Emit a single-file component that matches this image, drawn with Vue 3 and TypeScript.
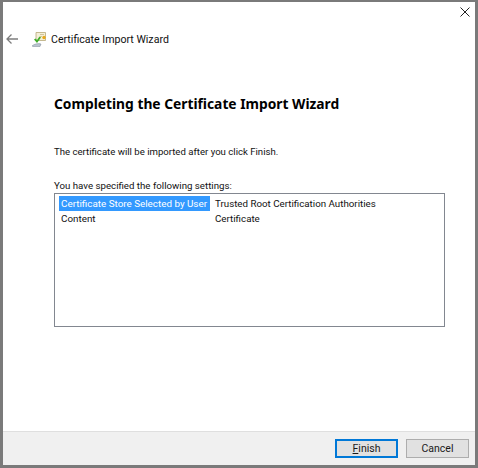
<script setup lang="ts">
const rows: [string, string][] = [
  ['Certificate Store Selected by User', 'Trusted Root Certification Authorities'],
  ['Content', 'Certificate'],
]
</script>

<template>
  <div class="window">
    <button class="close" aria-label="Close">
      <svg width="10" height="10" viewBox="0 0 10 10"><path d="M.5 .5L9.500 9.500M9.500 .5L.5 9.500" stroke="#222" stroke-width="1" fill="none" /></svg>
    </button>
    <header class="head">
      <svg class="back" width="12" height="10" viewBox="0 0 12 10"><path d="M12 5H1M5.500 .5L1 5l4.500 4.500" stroke="#7d7d7d" stroke-width="1.300" fill="none" /></svg>
      <svg class="cert" width="16" height="16" viewBox="0 0 16 16">
        <path d="M5 1.500h9.500v8H5z" fill="#f4efd8" stroke="#b7a878" stroke-width=".8" />
        <path d="M9 3.500h4M9 5.500h2" stroke="#c9b98a" stroke-width=".8" />
        <circle cx="13" cy="6.500" r="1.700" fill="#e8a81c" />
        <path d="M1 15c2-2 6-3 9-2l-1 2.500H2z" fill="#b9c3cf" stroke="#7f8b99" stroke-width=".5" />
        <path d="M3 8.500l1.500-1 1.500 1.500 2.500-3.500 1.500 1-4 5.500z" fill="#3fae2a" />
      </svg>
      <span class="head-title">Certificate Import Wizard</span>
    </header>
    <main class="body">
      <h1>Completing the Certificate Import Wizard</h1>
      <p class="intro">The certificate will be imported after you click Finish.</p>
      <p class="label">You have specified the following settings:</p>
      <div class="list">
        <div v-for="(r, i) in rows" :key="i" class="row">
          <span class="key" :class="{ selected: i === 0 }">{{ r[0] }}</span>
          <span class="val">{{ r[1] }}</span>
        </div>
      </div>
    </main>
    <footer class="foot">
      <button class="btn primary"><span class="u">F</span>inish</button>
      <button class="btn">Cancel</button>
    </footer>
  </div>
</template>

<style>
html, body { margin: 0; background: #fff; }
</style>

<style scoped>
.window {
  box-sizing: border-box;
  width: 478px;
  height: 468px;
  border: solid #7a7a7a;
  border-width: 2px 3px 3px 3px;
  background: #fff;
  display: flex;
  flex-direction: column;
  position: relative;
  font-family: Roboto, sans-serif;
  font-size: 9.700px;
  color: #111;
}
.close {
  position: absolute;
  top: 5px;
  right: 5px;
  width: 10px;
  height: 10px;
  padding: 0;
  border: 0;
  background: none;
  display: flex;
}
.head {
  height: 28px;
  margin-top: 23px;
  display: flex;
  align-items: center;
  padding-left: 3px;
}
.back { margin-right: 13px; }
.cert { margin-right: 4px; }
.head-title { font-size: 10.600px; }
.body {
  flex: 1;
  padding: 0 30px 0 51px;
  display: flex;
  flex-direction: column;
}
h1 {
  margin: 40px 0 0;
  font-family: "Noto Sans", sans-serif;
  font-size: 13.800px;
  line-height: 21px;
  font-weight: 700;
  color: #000;
}
.intro { margin: 30px 0 0; line-height: 15px; font-size: 9.600px; }
.label { margin: 19px 0 0; line-height: 15px; }
.list {
  box-sizing: border-box;
  height: 134px;
  width: 391px;
  border: 1px solid #828790;
  padding: 2px 0 0 4px;
}
.row { display: flex; height: 15px; line-height: 15px; }
.key { width: 149px; padding-left: 2px; white-space: nowrap; font-size: 9.850px; }
.key.selected { background: #3399ff; color: #fff; }
.val { margin-left: 5px; white-space: nowrap; font-size: 9.750px; }
.foot {
  height: 33px;
  background: #f0f0f0;
  border-top: 1px solid #dfdfdf;
  display: flex;
  justify-content: flex-end;
  align-items: center;
  gap: 8px;
  padding-right: 6px;
}
.btn {
  box-sizing: border-box;
  width: 63px;
  height: 19px;
  padding: 0;
  background: #e1e1e1;
  border: 1px solid #adadad;
  font: inherit;
  font-size: 10.500px;
  color: #1a1a1a;
  line-height: 15px;
}
.btn.primary { border: 2px solid #0078d7; }
.u { text-decoration: underline; }
</style>
